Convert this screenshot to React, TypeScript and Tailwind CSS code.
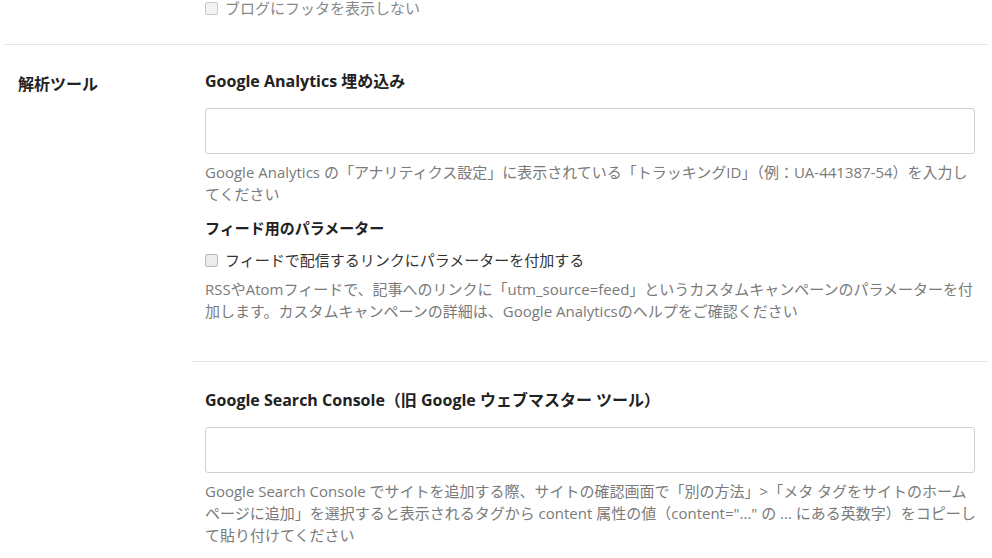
export default function App() {
  const font = { fontFamily: '"Open Sans", "Noto Sans CJK JP", sans-serif' };
  return (
    <div className="min-h-[558px] bg-white text-[#333]" style={font}>
      {/* previous section tail */}
      <div className="pl-[205px] pr-4 flex items-center gap-[7px] h-[17px] text-[15px] leading-[17px] text-[#888]">
        <span className="w-[13px] h-[13px] rounded-[2px] border border-[#c8c8c8] bg-[#f3f3f3]" />
        <span>ブログにフッタを表示しない</span>
      </div>

      <div className="ml-[4px] mr-[4px] mt-[27px] border-t border-[#e2e8ea]" />

      <div className="flex">
        <div className="w-[192px] shrink-0 pl-[18px] pt-[27px] text-[16px] font-bold text-[#222]">解析ツール</div>

        <div className="flex-1 mr-[4px]">
          <div className="pl-[13px] pr-[13px] pt-[25px] pb-[39px]">
            <h3 className="text-[16px] font-bold text-[#222] leading-[22px]">Google Analytics 埋め込み</h3>
            <input className="mt-[16px] block w-full h-[46px] rounded-[3px] border border-[#c9d3d7] bg-white outline-none" />
            <p className="mt-[7px] text-[15px] leading-[22px] text-[#7a7a7a]">
              Google Analytics の「アナリティクス設定」に表示されている「トラッキングID」（例：UA-441387-54）を入力してください
            </p>
            <h4 className="mt-[12px] text-[15px] font-bold text-[#222] leading-[22px]">フィード用のパラメーター</h4>
            <label className="mt-[10px] flex items-center gap-[7px] text-[15px] leading-[22px] text-[#333]">
              <span className="w-[13px] h-[13px] rounded-[2px] border border-[#b8b8b8] bg-[#ececec]" />
              フィードで配信するリンクにパラメーターを付加する
            </label>
            <p className="mt-[7px] text-[15px] leading-[22px] text-[#7a7a7a]">
              RSSやAtomフィードで、記事へのリンクに「utm_source=feed」というカスタムキャンペーンのパラメーターを付加します。カスタムキャンペーンの詳細は、Google Analyticsのヘルプをご確認ください
            </p>
          </div>

          <div className="border-t border-[#e2e8ea]" />

          <div className="pl-[13px] pr-[13px] pt-[27px]">
            <h3 className="text-[16px] font-bold text-[#222] leading-[22px]">Google Search Console（旧 Google ウェブマスター ツール）</h3>
            <input className="mt-[16px] block w-full h-[46px] rounded-[3px] border border-[#c9d3d7] bg-white outline-none" />
            <p className="mt-[7px] -mr-[4px] text-[15px] leading-[22px] text-[#7a7a7a]">
              Google Search Console でサイトを追加する際、サイトの確認画面で「別の方法」&gt;「メタ タグをサイトのホームページに追加」を選択すると表示されるタグから content 属性の値（content="..." の ... にある英数字）をコピーして貼り付けてください
            </p>
          </div>
        </div>
      </div>
    </div>
  );
}
